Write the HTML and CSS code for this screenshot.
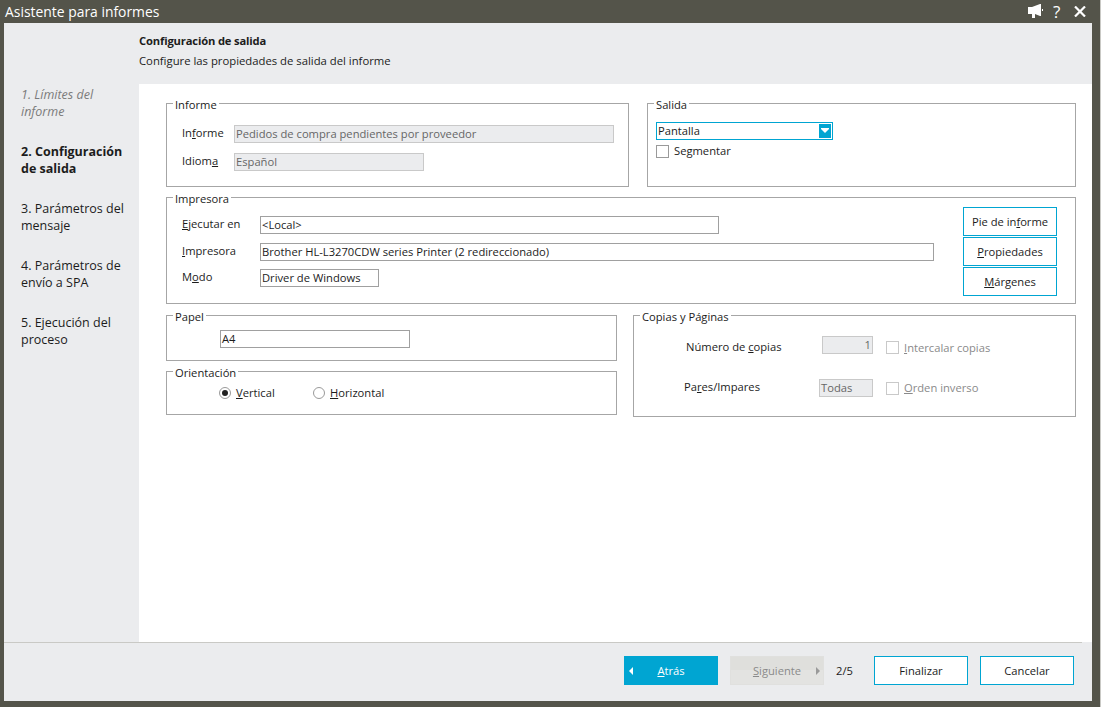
FILE: index.html
```html
<!DOCTYPE html>
<html lang="es">
<head>
    <meta charset="UTF-8">
    <title>Asistente para informes</title>
    <link rel="stylesheet" href="styles.css">
</head>
<body>
    <div class="window">
        <div class="titlebar">
            <span class="title">Asistente para informes</span>
            <div class="title-icons">
                <svg class="icon-horn" width="16" height="14" viewBox="0 0 16 14">
                    <path fill="#fff" d="M1 3h4l8-3h1v12h-1L8 10v4H5v-4H1z"/>
                    <path fill="#fff" d="M15 5h1v2h-1z"/>
                </svg>
                <span class="icon-help">?</span>
                <svg class="icon-close" width="12" height="11" viewBox="0 0 12 11">
                    <path stroke="#fff" stroke-width="2.2" d="M1 0.5l10 10M11 0.5l-10 10"/>
                </svg>
            </div>
        </div>

        <div class="frame">
            <header class="head">
                <h1>Configuración de salida</h1>
                <p>Configure las propiedades de salida del informe</p>
            </header>

            <div class="middle">
                <nav class="steps">
                    <div class="step done">1. Límites del informe</div>
                    <div class="step active">2. Configuración de salida</div>
                    <div class="step">3. Parámetros del mensaje</div>
                    <div class="step">4. Parámetros de envío a SPA</div>
                    <div class="step">5. Ejecución del proceso</div>
                </nav>

                <main class="content">
                    <div class="row-top">
                        <section class="group group-informe">
                            <span class="group-title">Informe</span>
                            <div class="form-row">
                                <span class="label w-52">In<u>f</u>orme</span>
                                <div class="field readonly w-380">Pedidos de compra pendientes por proveedor</div>
                            </div>
                            <div class="form-row">
                                <span class="label w-52">Idiom<u>a</u></span>
                                <div class="field readonly w-190">Español</div>
                            </div>
                        </section>

                        <section class="group group-salida">
                            <span class="group-title">Salida</span>
                            <div class="select">
                                <span class="select-text">Pantalla</span>
                                <span class="select-btn">
                                    <svg width="8" height="6" viewBox="0 0 8 6"><path fill="#fff" d="M0 0h8v1L4 5 0 1z"/></svg>
                                </span>
                            </div>
                            <label class="check check-segment"><span class="box"></span><span class="check-text">Se<u>g</u>mentar</span></label>
                        </section>
                    </div>

                    <section class="group group-printer">
                        <span class="group-title">Impresora</span>
                        <div class="printer-fields">
                            <div class="form-row">
                                <span class="label w-78"><u>E</u>jecutar en</span>
                                <div class="field w-459">&lt;Local&gt;</div>
                            </div>
                            <div class="form-row">
                                <span class="label w-78"><u>I</u>mpresora</span>
                                <div class="field w-674">Brother HL-L3270CDW series Printer (2 redireccionado)</div>
                            </div>
                            <div class="form-row form-row-tight">
                                <span class="label w-78">M<u>o</u>do</span>
                                <div class="field w-119">Driver de Windows</div>
                            </div>
                        </div>
                        <div class="printer-btns">
                            <button class="btn">Pie de in<u>f</u>orme</button>
                            <button class="btn"><u>P</u>ropiedades</button>
                            <button class="btn"><u>M</u>árgenes</button>
                        </div>
                    </section>

                    <div class="row-bottom">
                        <div class="col-left">
                            <section class="group group-paper">
                                <span class="group-title">Papel</span>
                                <div class="field w-190">A4</div>
                            </section>
                            <section class="group group-orient">
                                <span class="group-title">Orientación</span>
                                <label class="radio radio-first"><span class="dot on"></span><span class="radio-text"><u>V</u>ertical</span></label>
                                <label class="radio"><span class="dot"></span><span class="radio-text"><u>H</u>orizontal</span></label>
                            </section>
                        </div>

                        <section class="group group-copies">
                            <span class="group-title">Copias y Páginas</span>
                            <div class="copies-row">
                                <span class="label copies-label">Número de <u>c</u>opias</span>
                                <div class="field readonly num">1</div>
                                <label class="check off"><span class="box"></span><span><u>I</u>ntercalar copias</span></label>
                            </div>
                            <div class="copies-row copies-row-2">
                                <span class="label copies-label-2">Pa<u>r</u>es/Impares</span>
                                <div class="field readonly w-54">Todas</div>
                                <label class="check off"><span class="box"></span><span class="check-text"><u>O</u>rden inverso</span></label>
                            </div>
                        </section>
                    </div>
                </main>
            </div>

            <div class="foot-line"></div>
            <footer class="foot">
                <button class="btn btn-primary">
                    <svg class="arrow arrow-left" width="4" height="8" viewBox="0 0 4 8"><path fill="#fff" d="M4 0v8L0 4z"/></svg>
                    <u>A</u>trás
                </button>
                <button class="btn btn-disabled">
                    <u>S</u>iguiente
                    <svg class="arrow arrow-right" width="4" height="8" viewBox="0 0 4 8"><path fill="#9a9a9a" d="M0 0v8l4-4z"/></svg>
                </button>
                <span class="page-count">2/5</span>
                <button class="btn">Finalizar</button>
                <button class="btn">Cancelar</button>
            </footer>
        </div>
    </div>
</body>
</html>
```

FILE: styles.css
```css
* {
    margin: 0;
    padding: 0;
    box-sizing: border-box;
}

body {
    width: 1101px;
    height: 707px;
    overflow: hidden;
    background: #54544a;
    font-family: 'Open Sans', 'Noto Sans', sans-serif;
    font-size: 11.2px;
    color: #1c1c1c;
}

.window {
    width: 1101px;
    height: 707px;
    display: flex;
    flex-direction: column;
    background: #54544a;
    border-right: 1px solid #c9c9c5;
}

/* title bar */
.titlebar {
    height: 23px;
    flex: none;
    display: flex;
    justify-content: space-between;
    align-items: center;
    padding: 0 14px 1px 5px;
    color: #fff;
}

.title {
    font-size: 13.9px;
}

.title-icons {
    display: flex;
    align-items: center;
}

.icon-horn {
    margin-right: 10px;
}

.icon-help {
    font-size: 17px;
    width: 9px;
    line-height: 15px;
    margin-right: 12px;
}

/* frame */
.frame {
    flex: 1;
    margin: 0 8px 6px 4px;
    display: flex;
    flex-direction: column;
    background: #ebecee;
    min-height: 0;
}

.head {
    height: 61px;
    flex: none;
    padding: 10px 0 0 135px;
}

.head h1 {
    font-size: 11.2px;
    font-weight: 700;
    line-height: 15px;
    letter-spacing: -0.15px;
}

.head p {
    margin-top: 5px;
    line-height: 15px;
    font-size: 11.3px;
}

.middle {
    flex: 1;
    display: flex;
    min-height: 0;
}

/* wizard steps */
.steps {
    width: 135px;
    flex: none;
    padding: 2px 8px 0 17px;
    display: flex;
    flex-direction: column;
    gap: 23px;
}

.step {
    font-size: 12.5px;
    line-height: 17px;
}

.step.done {
    font-style: italic;
    color: #7b7b7b;
}

.step.active {
    font-weight: 700;
}

.content {
    flex: 1;
    background: #fff;
    padding: 19px 16px 0 27px;
}

/* group boxes */
.group {
    position: relative;
    border: 1px solid #a6a6a6;
}

.group-title {
    position: absolute;
    top: -7px;
    left: 6px;
    padding: 0 2px;
    background: #fff;
    line-height: 16px;
}

.row-top {
    display: flex;
    gap: 18px;
}

.group-informe {
    width: 463px;
    height: 84px;
    padding: 21px 0 0 15px;
}

.group-salida {
    flex: 1;
    height: 84px;
    padding: 18px 0 0 8px;
}

.group-printer {
    margin-top: 10px;
    height: 107px;
    display: flex;
    justify-content: space-between;
    padding: 9px 18px 0 15px;
}

.printer-fields {
    padding-top: 9px;
}

.printer-btns {
    display: flex;
    flex-direction: column;
    gap: 1px;
}

.row-bottom {
    margin-top: 11px;
    display: flex;
    gap: 16px;
}

.col-left {
    width: 451px;
    flex: none;
    display: flex;
    flex-direction: column;
    gap: 10px;
}

.group-paper {
    height: 46px;
    padding: 14px 0 0 53px;
}

.group-orient {
    height: 44px;
    display: flex;
    padding: 12px 0 0 52px;
}

.group-copies {
    flex: 1;
    height: 102px;
    padding-top: 20px;
}

/* form rows */
.form-row {
    display: flex;
    align-items: center;
    margin-bottom: 9px;
}

.group-informe .form-row {
    margin-bottom: 10px;
}

.form-row-tight {
    margin-top: -1px;
}

.label {
    flex: none;
    line-height: 18px;
    position: relative;
    top: -1px;
}

.w-52 { width: 52px; }
.w-78 { width: 78px; }
.w-54 { width: 54px; }
.w-119 { width: 119px; }
.w-190 { width: 190px; }
.w-380 { width: 380px; }
.w-459 { width: 459px; }
.w-674 { width: 674px; }

.field {
    height: 18px;
    border: 1px solid #a0a0a0;
    background: #fff;
    padding-left: 1px;
    line-height: 16px;
    white-space: nowrap;
}

.field.readonly {
    background: #ebecee;
    border-color: #c9c9c9;
    color: #666;
}

.field.num {
    width: 51px;
    text-align: right;
    padding-right: 1px;
}

/* combo */
.select {
    width: 177px;
    height: 18px;
    border: 1px solid #00a5d2;
    display: flex;
    justify-content: space-between;
    align-items: center;
    padding: 0 1px 0 1px;
}

.select-text {
    padding-bottom: 2px;
}

.select-btn {
    width: 12px;
    height: 14px;
    background: #00a5d2;
    display: flex;
    justify-content: center;
    align-items: center;
}

/* checks and radios */
.check {
    display: flex;
    align-items: center;
    gap: 5px;
    line-height: 13px;
}

.check-text {
    margin-top: -2px;
}

.check-segment {
    margin-top: 5px;
}

.box {
    width: 13px;
    height: 13px;
    flex: none;
    border: 1px solid #9a9a9a;
    background: #fff;
}

.check.off {
    color: #8a8a8a;
    margin-left: 13px;
    align-self: flex-end;
}

.check.off .box {
    border-color: #c9c9c9;
}

.radio {
    display: flex;
    align-items: center;
    height: 18px;
    gap: 5px;
}

.radio-text {
    padding-bottom: 2px;
}

.radio-first {
    width: 94px;
}

.dot {
    width: 12px;
    height: 12px;
    flex: none;
    border: 1px solid #9a9a9a;
    border-radius: 50%;
    position: relative;
}

.dot.on::after {
    content: '';
    position: absolute;
    top: 2px;
    left: 2px;
    width: 6px;
    height: 6px;
    border-radius: 50%;
    background: #222;
}

/* copies */
.copies-row {
    display: flex;
}

.copies-row-2 {
    margin-top: 25px;
}

.copies-row-2 .check.off {
    margin-bottom: 2px;
}

.copies-label {
    width: 136px;
    margin-left: 52px;
    top: 2px;
}

.copies-label-2 {
    width: 135px;
    margin-left: 50px;
}

/* buttons */
.btn {
    position: relative;
    width: 94px;
    height: 29px;
    flex: none;
    border: 1px solid #00a5d2;
    background: #fff;
    color: #1c1c1c;
    font-family: inherit;
    font-size: 11.2px;
}

.btn-primary {
    background: #00a5d2;
    color: #fff;
}

.btn-disabled {
    border-color: #e0e0de;
    background: linear-gradient(#dfdfdc 50%, #e3e3e1 50%);
    color: #8a8a8a;
}

.arrow {
    position: absolute;
    top: 10px;
}

.arrow-left {
    left: 4px;
}

.arrow-right {
    right: 3px;
}

/* footer */
.foot-line {
    height: 1px;
    flex: none;
    margin-right: 10px;
    background: #c9c9c5;
}

.foot {
    height: 58px;
    flex: none;
    display: flex;
    align-items: flex-start;
    justify-content: flex-end;
    padding: 13px 18px 0 0;
    gap: 12px;
}

.page-count {
    width: 26px;
    line-height: 29px;
}
```
